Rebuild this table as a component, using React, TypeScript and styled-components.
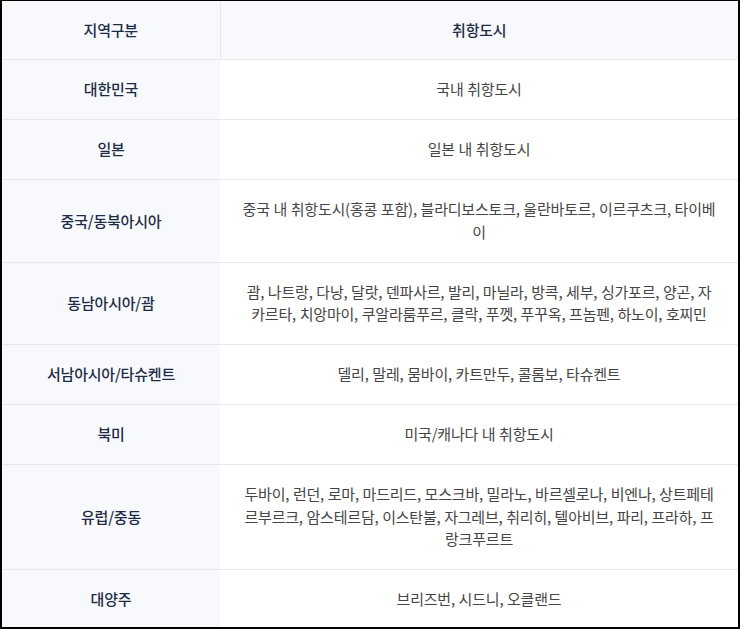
import React from "react";
import styled, { createGlobalStyle } from "styled-components";

const Global = createGlobalStyle`
  html, body {
    margin: 0;
    padding: 0;
    background: #fff;
  }
  body {
    font-family: "Noto Sans CJK KR", "Noto Sans", sans-serif;
  }
`;

const Frame = styled.div`
  width: 740px;
  height: 629px;
  box-sizing: border-box;
  border: 2px solid #000;
  border-top-width: 1px;
  overflow: hidden;
  background: #fff;
`;

const Table = styled.table`
  width: 100%;
  border-collapse: collapse;
  table-layout: fixed;
  font-size: 15px;
  line-height: 22.5px;
  letter-spacing: -0.2px;
  word-spacing: 0.5px;
`;

const RegionCol = styled.col`
  width: 218px;
`;

const HeadCell = styled.th<{ $first?: boolean }>`
  height: 58px;
  padding: 0 21px;
  background: #f7f9fc;
  color: #1f2c47;
  font-weight: 500;
  text-align: center;
  border-bottom: 1px solid #e4e8ee;
  border-left: ${(p) => (p.$first ? "none" : "1px solid #e4e8ee")};
`;

const Row = styled.tr`
  border-top: 1px solid #e4e8ee;
  &:first-child {
    border-top: none;
  }
`;

const Region = styled.td`
  padding: 18.25px 10px;
  background: #f7f9fc;
  color: #1f2c47;
  font-weight: 500;
  text-align: center;
  vertical-align: middle;
`;

const Cities = styled.td`
  padding: 18.25px 21px;
  color: #454545;
  font-weight: 400;
  text-align: center;
  vertical-align: middle;
`;

const rows: [string, string][] = [
  ["대한민국", "국내 취항도시"],
  ["일본", "일본 내 취항도시"],
  ["중국/동북아시아", "중국 내 취항도시(홍콩 포함), 블라디보스토크, 울란바토르, 이르쿠츠크, 타이베이"],
  ["동남아시아/괌", "괌, 나트랑, 다낭, 달랏, 덴파사르, 발리, 마닐라, 방콕, 세부, 싱가포르, 양곤, 자카르타, 치앙마이, 쿠알라룸푸르, 클락, 푸껫, 푸꾸옥, 프놈펜, 하노이, 호찌민"],
  ["서남아시아/타슈켄트", "델리, 말레, 뭄바이, 카트만두, 콜롬보, 타슈켄트"],
  ["북미", "미국/캐나다 내 취항도시"],
  ["유럽/중동", "두바이, 런던, 로마, 마드리드, 모스크바, 밀라노, 바르셀로나, 비엔나, 상트페테르부르크, 암스테르담, 이스탄불, 자그레브, 취리히, 텔아비브, 파리, 프라하, 프랑크푸르트"],
  ["대양주", "브리즈번, 시드니, 오클랜드"],
];

export default function App() {
  return (
    <>
      <Global />
      <Frame>
        <Table>
          <colgroup>
            <RegionCol />
            <col />
          </colgroup>
          <thead>
            <tr>
              <HeadCell $first>지역구분</HeadCell>
              <HeadCell>취항도시</HeadCell>
            </tr>
          </thead>
          <tbody>
            {rows.map(([region, cities]) => (
              <Row key={region}>
                <Region>{region}</Region>
                <Cities>{cities}</Cities>
              </Row>
            ))}
          </tbody>
        </Table>
      </Frame>
    </>
  );
}
